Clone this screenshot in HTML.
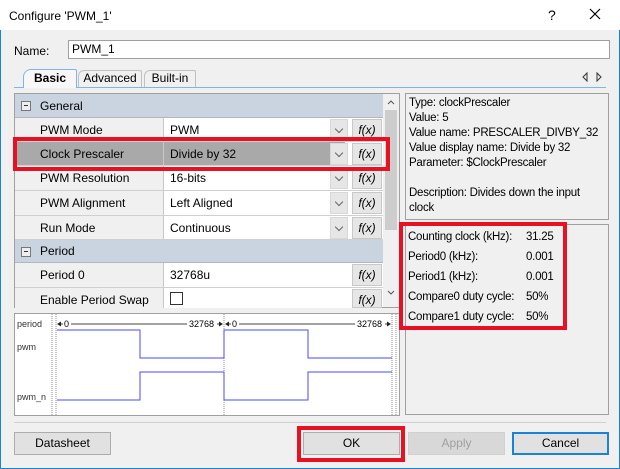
<!DOCTYPE html>
<html><head><style>
*{box-sizing:border-box;margin:0;padding:0}
body{width:620px;height:469px;background:#f0f0f0;font-family:"Liberation Sans",sans-serif;font-size:12px;color:#000;position:relative;overflow:hidden}
.a{position:absolute}
.win{left:0;top:0;width:620px;height:469px;border:1px solid #1883d7;border-top:none}
.row{position:absolute;left:15px;width:368px;height:24px;border-bottom:1px solid #d0d0d0}
.lab{position:absolute;left:0;top:0;width:149px;height:100%;background:#f0f0f0;border-right:1px solid #c8c8c8;padding-left:25px;line-height:24px}
.val{position:absolute;left:149px;top:0;width:181px;height:100%;background:#fff;padding-left:6px;line-height:24px}
.dd{position:absolute;left:315px;top:1px;width:18px;height:22px;background:#e6e6e6;border:1px solid #d8d8d8}
.dd:after{content:"";position:absolute;left:5px;top:6px;width:5px;height:5px;border-right:1px solid #666;border-bottom:1px solid #666;transform:rotate(45deg)}
.fx{position:absolute;left:337px;top:1px;width:30px;height:22px;background:#e6e6e6;border:1px solid #c8c8c8;text-align:center;line-height:20px;font-style:italic}
.hdr{position:absolute;left:15px;width:368px;height:24px;background:#c9d4e0;border-bottom:1px solid #b0b8c0;line-height:24px;padding-left:25px}
.hdr i{position:absolute;left:6px;top:7px;width:10px;height:10px;border:1px solid #777;background:#eee}
.hdr i:after{content:"";position:absolute;left:2px;top:3px;width:4px;height:1px;background:#333}
.btn{position:absolute;top:432px;height:23px;background:#e1e1e1;border:1px solid #adadad;text-align:center;line-height:21px}
.red{position:absolute;border:4px solid #e81123}
.info{font-size:11.5px;letter-spacing:-0.25px}
</style></head><body>
<div class="a win"></div>
<div class="a" style="left:0;top:0;width:620px;height:30px;background:#fff"></div>
<div class="a" style="left:9px;top:9px">Configure 'PWM_1'</div>
<div class="a" style="left:548px;top:7px;font-size:14px">?</div>
<svg class="a" style="left:589px;top:8px" width="12" height="12"><path d="M1 1L11 11M11 1L1 11" stroke="#000" stroke-width="1.2"/></svg>
<div class="a" style="left:14px;top:44px">Name:</div>
<div class="a" style="left:68px;top:40px;width:542px;height:19px;background:#fff;border:1px solid #a0a0a0;padding-left:3px;line-height:17px">PWM_1</div>
<div class="a" style="left:14px;top:87px;width:592px;height:1px;background:#7eb4ea"></div>
<div class="a" style="left:23px;top:69px;width:54px;height:19px;background:#f7f7f7;border:1px solid #7eb4ea;border-bottom:none;border-radius:8px 2px 0 0;text-align:center;line-height:17px;font-weight:bold">Basic</div>
<div class="a" style="left:78px;top:70px;width:64px;height:17px;border:1px solid #c0c0c0;border-bottom:none;border-radius:6px 2px 0 0;text-align:center;line-height:15px">Advanced</div>
<div class="a" style="left:144px;top:70px;width:52px;height:17px;border:1px solid #c0c0c0;border-bottom:none;border-radius:6px 2px 0 0;text-align:center;line-height:15px">Built-in</div>
<svg class="a" style="left:582px;top:72px" width="20" height="10"><path d="M5 1L1 5L5 9Z M15 1L19 5L15 9Z" fill="none" stroke="#333"/></svg>
<div class="a" style="left:14px;top:93px;width:386px;height:215px;border:1px solid #a0a0a0;background:#fff"></div>
<div class="hdr" style="top:94px"><i></i>General</div>
<div class="row" style="top:118px"><div class="lab">PWM Mode</div><div class="val">PWM</div><div class="dd"></div><div class="fx">f(x)</div></div>
<div class="row" style="top:142px"><div class="lab" style="background:#a9a9a9">Clock Prescaler</div><div class="val" style="background:#a9a9a9">Divide by 32</div><div class="dd"></div><div class="fx">f(x)</div></div>
<div class="row" style="top:166px;height:25px"><div class="lab">PWM Resolution</div><div class="val">16-bits</div><div class="dd"></div><div class="fx">f(x)</div></div>
<div class="row" style="top:191px;height:25px"><div class="lab">PWM Alignment</div><div class="val">Left Aligned</div><div class="dd"></div><div class="fx">f(x)</div></div>
<div class="row" style="top:216px"><div class="lab">Run Mode</div><div class="val">Continuous</div><div class="dd"></div><div class="fx">f(x)</div></div>
<div class="hdr" style="top:240px;height:23px;line-height:23px"><i></i>Period</div>
<div class="row" style="top:263px;height:25px"><div class="lab">Period 0</div><div class="val" style="width:188px">32768u</div><div class="fx">f(x)</div></div>
<div class="row" style="top:288px;height:20px;border:none"><div class="lab">Enable Period Swap</div><div class="val" style="width:188px"><span style="display:inline-block;width:13px;height:13px;border:1px solid #333;margin-top:4px"></span></div><div class="fx" style="height:19px">f(x)</div></div>
<div class="a" style="left:383px;top:94px;width:16px;height:213px;background:#f0f0f0"></div>
<div class="a" style="left:385px;top:110px;width:12px;height:120px;background:#cdcdcd"></div>
<svg class="a" style="left:386px;top:98px" width="10" height="200"><path d="M2 6L5 3L8 6M2 193L5 196L8 193" fill="none" stroke="#555"/></svg>
<div class="red" style="left:13px;top:137px;width:377px;height:34px"></div>
<div class="a" style="left:14px;top:313px;width:386px;height:103px;border:1px solid #a0a0a0;background:#fff"></div>
<svg class="a" style="left:15px;top:314px" width="384" height="101" font-family="Liberation Sans" font-size="9">
<text x="2" y="13" fill="#333">period</text><text x="2" y="36" fill="#333">pwm</text><text x="2" y="86" fill="#333">pwm_n</text>
<g stroke="#888" stroke-dasharray="1,1"><line x1="37" y1="0" x2="37" y2="101"/><line x1="41" y1="0" x2="41" y2="101"/><line x1="209" y1="0" x2="209" y2="101"/><line x1="377" y1="0" x2="377" y2="101"/><line x1="381" y1="0" x2="381" y2="101"/></g>
<g stroke="#444"><line x1="43" y1="10" x2="48" y2="10"/><line x1="56" y1="10" x2="172" y2="10"/><line x1="211" y1="10" x2="216" y2="10"/><line x1="224" y1="10" x2="340" y2="10"/><line x1="202" y1="10" x2="207" y2="10"/><line x1="370" y1="10" x2="375" y2="10"/></g>
<g fill="#222"><path d="M42 10L46 7.5V12.5Z M208 10L204 7.5V12.5Z M210 10L214 7.5V12.5Z M376 10L372 7.5V12.5Z"/></g>
<text x="49" y="13">0</text><text x="174" y="13">32768</text><text x="217" y="13">0</text><text x="342" y="13">32768</text>
<polyline fill="none" stroke="#4a4aff" points="42,16 125,16 125,44 209,44 209,16 293,16 293,44 377,44"/>
<polyline fill="none" stroke="#4a4aff" points="42,86 125,86 125,58 209,58 209,86 293,86 293,58 377,58"/>
</svg>
<div class="a info" style="left:405px;top:93px;width:204px;height:127px;border:1px solid #a0a0a0;padding:2px 3px;line-height:15px;white-space:nowrap">Type: clockPrescaler<br>Value: 5<br>Value name: PRESCALER_DIVBY_32<br>Value display name: Divide by 32<br>Parameter: $ClockPrescaler<br><br>Description: Divides down the input<br>clock</div>
<div class="a" style="left:405px;top:224px;width:204px;height:191px;border:1px solid #a0a0a0"></div>
<div class="a info" style="left:408px;top:227px;line-height:20px">Counting clock (kHz):<br>Period0 (kHz):<br>Period1 (kHz):<br>Compare0 duty cycle:<br>Compare1 duty cycle:</div>
<div class="a info" style="left:526px;top:227px;line-height:20px">31.25<br>0.001<br>0.001<br>50%<br>50%</div>
<div class="red" style="left:399px;top:222px;width:168px;height:108px"></div>
<div class="a" style="left:14px;top:422px;width:592px;height:1px;background:#d0d0d0"></div>
<div class="btn" style="left:14px;width:97px">Datasheet</div>
<div class="btn" style="left:303px;width:97px">OK</div>
<div class="red" style="left:297px;top:426px;width:108px;height:36px"></div>
<div class="btn" style="left:408px;width:97px;color:#a0a0a0;border-color:#d0d0d0;background:#d8d8d8">Apply</div>
<div class="btn" style="left:512px;width:97px;border:2px solid #1883d7;line-height:19px">Cancel</div>
</body></html>
